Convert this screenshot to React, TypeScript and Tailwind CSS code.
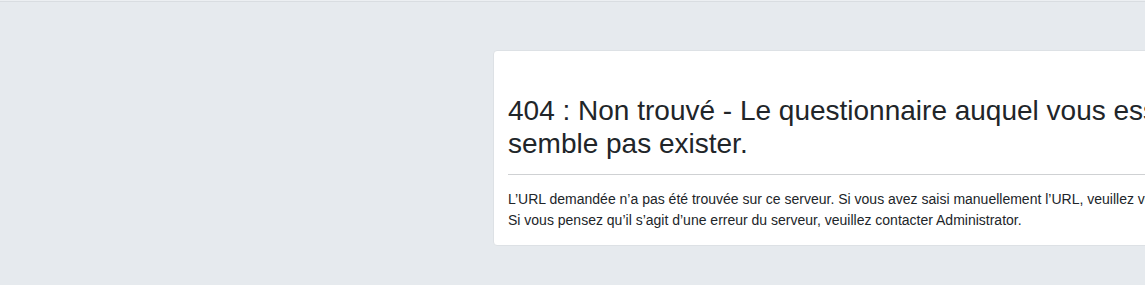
export default function App() {
    return (
        <div
            className="h-[285px] w-full overflow-hidden bg-[#e6eaee] text-[#212529]"
            style={{ fontFamily: '"Liberation Sans", Arial, sans-serif' }}
        >
            {/* Top rule */}
            <div className="h-px bg-[#eceff2]" />
            <div className="h-px bg-[#d9dde1]" />

            {/* Error card */}
            <div className="ml-[493px] mt-[48px] w-[960px] rounded-[4px] border border-[#dde1e5] bg-white px-[14px] pt-[43px] pb-[14px]">
                <h1 className="text-[28px] leading-[33px] font-normal">
                    404 : Non trouvé - Le questionnaire auquel vous essayez
                    d’accéder ne semble pas exister.
                </h1>
                <hr className="mt-[14px] mb-[14px] border-t border-[#cfd1d3]" />
                <p className="text-[14px] leading-[21px] whitespace-nowrap">
                    L’URL demandée n’a pas été trouvée sur ce serveur. Si vous
                    avez saisi manuellement l’URL, veuillez vérifier
                    l’orthographe et réessayer.
                    <br />
                    Si vous pensez qu’il s’agit d’une erreur du serveur,
                    veuillez contacter Administrator.
                </p>
            </div>
        </div>
    );
}
